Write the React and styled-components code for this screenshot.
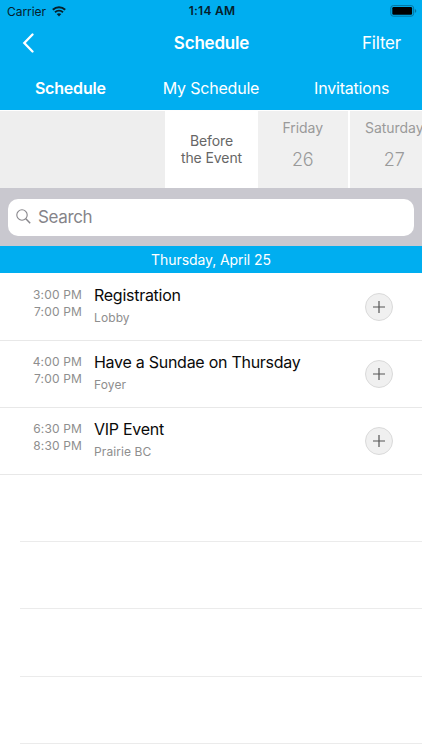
import React, { useState } from 'react';
import styled, { createGlobalStyle } from 'styled-components';

const GlobalStyle = createGlobalStyle`
  * {
    box-sizing: border-box;
  }
  body {
    margin: 0;
    background: #fff;
    overflow: hidden;
  }
  button {
    font: inherit;
    letter-spacing: inherit;
    color: inherit;
    padding: 0;
    border: none;
    background: none;
    cursor: pointer;
  }
`;

const Screen = styled.div`
  display: flex;
  flex-direction: column;
  width: 422px;
  height: 750px;
  overflow: hidden;
  background: #fff;
  font-family: Inter, "Liberation Sans", sans-serif;
  white-space: nowrap;
`;

const Header = styled.header`
  height: 110px;
  flex: none;
  background: #00aef0;
  color: #fff;
`;

const StatusBar = styled.div`
  display: grid;
  grid-template-columns: 1fr auto 1fr;
  align-items: center;
  height: 22px;
  padding: 0 5px 0 7px;
  color: #06202b;
  font-size: 12px;
`;

const Carrier = styled.div`
  display: flex;
  align-items: center;
  gap: 6px;
  height: 21px;
  letter-spacing: -0.05px;
`;

const Clock = styled.div`
  font-weight: 600;
  letter-spacing: 0.25px;
  line-height: 22px;
  height: 22px;
`;

const BatteryBox = styled.div`
  display: flex;
  justify-content: flex-end;
  height: 13px;
`;

const NavBar = styled.div`
  display: grid;
  grid-template-columns: 1fr auto 1fr;
  align-items: center;
  height: 42px;
  padding: 0 21px 0 22px;
`;

const BackButton = styled.button`
  display: flex;
  justify-self: start;
`;

const Title = styled.h1`
  margin: 0;
  font-size: 17px;
  font-weight: 600;
  letter-spacing: -0.2px;
`;

const FilterButton = styled.button`
  justify-self: end;
  && {
    font-size: 17px;
    letter-spacing: -0.2px;
  }
`;

const Tabs = styled.nav`
  display: grid;
  grid-template-columns: repeat(3, 1fr);
  height: 46px;
  padding-top: 2px;
`;

const Tab = styled.button`
  && {
    font-size: 16px;
    font-weight: ${({ $active }) => ($active ? 600 : 400)};
    letter-spacing: -0.2px;
  }
`;

const Days = styled.div`
  display: flex;
  flex: none;
  height: 78px;
  border-top: 1px solid #fff;
  background: #fff;
  overflow: hidden;
`;

const DaySpacer = styled.div`
  flex: none;
  width: 165px;
  background: #eee;
`;

const Day = styled.button`
  display: flex;
  flex: none;
  flex-direction: column;
  align-items: center;
  justify-content: ${({ $active }) => ($active ? 'center' : 'flex-start')};
  width: ${({ $active }) => ($active ? 93 : 89.5)}px;
  margin-right: ${({ $active }) => ($active ? 0 : 2)}px;
  && {
    padding-bottom: ${({ $active }) => ($active ? 2 : 0)}px;
    background: ${({ $active }) => ($active ? '#fff' : '#f0f0f0')};
    color: ${({ $active }) => ($active ? '#666' : '#9a9a9a')};
    font-size: 14px;
    line-height: 17px;
    letter-spacing: -0.1px;
  }
`;

const Weekday = styled.span`
  margin-top: 8px;
  letter-spacing: -0.05px;
`;

const DayNumber = styled.span`
  margin-top: 12px;
  font-size: 18px;
  font-weight: 300;
  line-height: 23px;
`;

const SearchBar = styled.div`
  flex: none;
  height: 58px;
  padding: 11px 8px 10px;
  background: #c9c8cf;
`;

const SearchField = styled.label`
  display: flex;
  align-items: center;
  gap: 7px;
  height: 37px;
  padding: 0 8px 2px;
  border-radius: 10px;
  background: #fff;
`;

const SearchInput = styled.input`
  flex: 1;
  min-width: 0;
  padding: 0;
  border: none;
  outline: none;
  background: none;
  font: 400 17px Inter, "Liberation Sans", sans-serif;
  letter-spacing: -0.35px;
  &::placeholder {
    color: #858489;
    opacity: 1;
  }
`;

const DateBand = styled.div`
  display: flex;
  align-items: center;
  justify-content: center;
  flex: none;
  height: 27px;
  background: #00aef0;
  color: #fff;
  font-size: 14px;
  letter-spacing: -0.08px;
`;

const Row = styled.div`
  display: flex;
  flex: none;
  height: ${({ $first }) => ($first ? 68 : 67)}px;
  padding: ${({ $first }) => ($first ? 13 : 12)}px 29px 0 0;
  border-bottom: 1px solid #e8e8e8;
`;

const EmptyRow = styled.div`
  flex: none;
  height: 67.2px;
  margin-left: 20px;
  border-bottom: 1px solid #ebebeb;
`;

const Times = styled.div`
  width: 82px;
  color: #8e8e8e;
  font-size: 12px;
  line-height: 17px;
  letter-spacing: 0.15px;
  text-align: right;
`;

const Details = styled.div`
  flex: 1;
  margin-top: -1px;
  padding-left: 12px;
`;

const EventName = styled.div`
  color: #0a0a0a;
  font-size: 16px;
  line-height: 20px;
  letter-spacing: -0.27px;
`;

const Place = styled.div`
  margin-top: 4px;
  color: #8e8e8e;
  font-size: 12px;
  line-height: 17px;
  letter-spacing: 0.1px;
`;

const AddButton = styled.button`
  display: flex;
  align-items: center;
  justify-content: center;
  width: 28px;
  height: 28px;
  margin-top: 7px;
  && {
    border: 1px solid #dadada;
    border-radius: 50%;
    background: #f0f0f0;
  }
`;

const WifiIcon = () => (
  <svg width="14" height="11" viewBox="0 0 14 11" fill="none" stroke="#06202b">
    <path d="M0.8 3.7C4.4 0.5 9.6 0.5 13.2 3.7" strokeWidth="2.1" />
    <path d="M3 6.3C5.3 4.3 8.7 4.3 11 6.3" strokeWidth="1.9" />
    <path d="M4.7 8.1Q7 6.2 9.3 8.1L7 10.5Z" fill="#06202b" stroke="none" />
  </svg>
);

const BatteryIcon = () => (
  <svg width="27" height="12" viewBox="0 0 27 12">
    <rect x="0.8" y="0.6" width="22.8" height="10.6" rx="2.5" fill="none" stroke="#04749f" />
    <rect x="2.3" y="2.1" width="19.8" height="7.6" rx="1.2" fill="#000" />
    <path d="M24.8 4.1Q26.3 4.5 26.3 5.9T24.8 7.7Z" fill="#04749f" />
  </svg>
);

const BackIcon = () => (
  <svg width="13" height="20" viewBox="0 0 13 20" fill="none">
    <path d="M10.5 1.5L2.3 10L10.5 18.5" stroke="#fff" strokeWidth="2.3" strokeLinecap="round" />
  </svg>
);

const SearchIcon = () => (
  <svg width="15" height="15" viewBox="0 0 15 15" fill="none" stroke="#87868b">
    <circle cx="6" cy="6" r="5.2" strokeWidth="1.1" />
    <path d="M9.8 9.8L14.2 14.2" strokeWidth="1.5" />
  </svg>
);

const PlusIcon = () => (
  <svg width="12" height="12" viewBox="0 0 12 12" stroke="#555" strokeWidth="1.2">
    <path d="M6 0V12M0 6H12" />
  </svg>
);

const tabs = ['Schedule', 'My Schedule', 'Invitations'];

const events = [
  { start: '3:00 PM', end: '7:00 PM', name: 'Registration', place: 'Lobby' },
  { start: '4:00 PM', end: '7:00 PM', name: 'Have a Sundae on Thursday', place: 'Foyer' },
  { start: '6:30 PM', end: '8:30 PM', name: 'VIP Event', place: 'Prairie BC' },
];

const App = () => {
  const [tab, setTab] = useState('Schedule');

  return (
    <Screen>
      <GlobalStyle />
      <Header>
        <StatusBar>
          <Carrier>Carrier <WifiIcon /></Carrier>
          <Clock>1:14 AM</Clock>
          <BatteryBox><BatteryIcon /></BatteryBox>
        </StatusBar>
        <NavBar>
          <BackButton><BackIcon /></BackButton>
          <Title>Schedule</Title>
          <FilterButton>Filter</FilterButton>
        </NavBar>
        <Tabs>
          {tabs.map((name) => (
            <Tab key={name} $active={name === tab} onClick={() => setTab(name)}>{name}</Tab>
          ))}
        </Tabs>
      </Header>

      <Days>
        <DaySpacer />
        <Day $active>
          <span>Before</span>
          <span>the Event</span>
        </Day>
        <Day>
          <Weekday>Friday</Weekday>
          <DayNumber>26</DayNumber>
        </Day>
        <Day>
          <Weekday>Saturday</Weekday>
          <DayNumber>27</DayNumber>
        </Day>
      </Days>

      <SearchBar>
        <SearchField>
          <SearchIcon />
          <SearchInput placeholder="Search" />
        </SearchField>
      </SearchBar>

      <DateBand>Thursday, April 25</DateBand>

      {events.map((event, i) => (
        <Row key={event.name} $first={i === 0}>
          <Times>
            <div>{event.start}</div>
            <div>{event.end}</div>
          </Times>
          <Details>
            <EventName>{event.name}</EventName>
            <Place>{event.place}</Place>
          </Details>
          <AddButton><PlusIcon /></AddButton>
        </Row>
      ))}
      {[0, 1, 2, 3].map((n) => <EmptyRow key={n} />)}
    </Screen>
  );
};

export default App;
